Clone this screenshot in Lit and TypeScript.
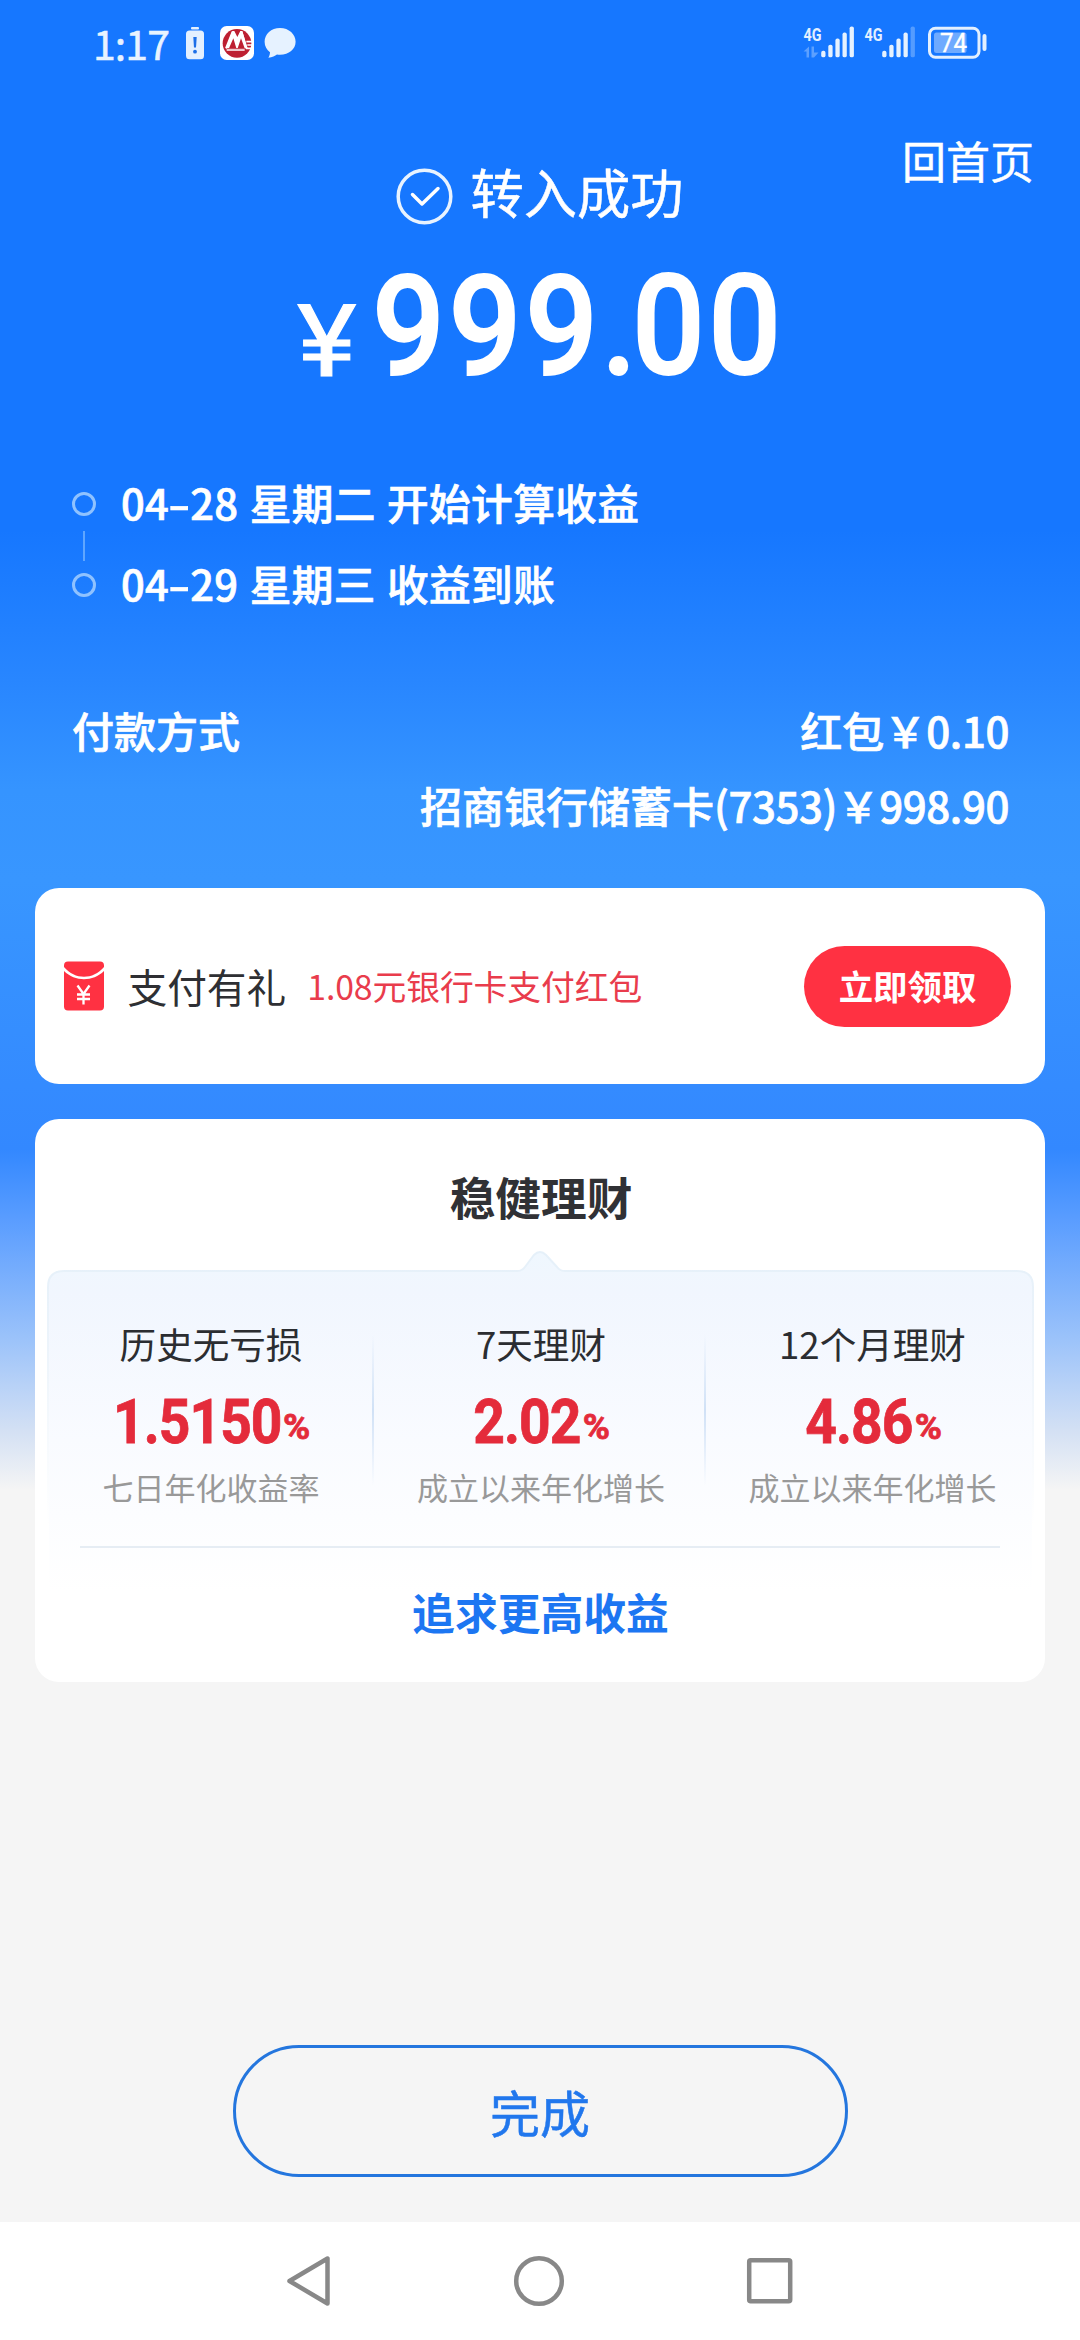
import { LitElement, html, css, svg } from "lit";
import { customElement, property } from "lit/decorators.js";

interface Product {
  name: string;
  rate: string;
  note: string;
}

const PRODUCTS: Product[] = [
  { name: "历史无亏损", rate: "1.5150", note: "七日年化收益率" },
  { name: "7天理财", rate: "2.02", note: "成立以来年化增长" },
  { name: "12个月理财", rate: "4.86", note: "成立以来年化增长" },
];

@customElement("signal-bars")
class SignalBars extends LitElement {
  @property({ type: Number }) level = 5;
  @property({ type: Boolean }) data = false;

  static styles = css`
    :host { display: block; width: 52px; height: 34px; }
    svg { display: block; overflow: visible; }
    text { font: 700 18px Roboto, sans-serif; fill: #e3f0ff; }
  `;

  render() {
    return html`<svg width="52" height="34" viewBox="0 0 52 34">
      <text x="1.500" y="15" textLength="18" lengthAdjust="spacingAndGlyphs">4G</text>
      ${this.data
        ? svg`<path d="M1.500 25.500L7 20.500v11H4.500v-6zM9.500 20.500H12v6h4.500L12 31.500H9.500z" fill="#fff" opacity=".3"/>`
        : ""}
      ${[0, 1, 2, 3, 4].map((i) => {
        const h = 6.5 + i * 6.1;
        return svg`<rect x=${19.2 + i * 7.1} y=${31.3 - h} width="4.300" height=${h} rx="1.900"
          fill="#e6f2ff" opacity=${i < this.level ? 1 : 0.3} />`;
      })}
    </svg>`;
  }
}

@customElement("status-bar")
class StatusBar extends LitElement {
  static styles = css`
    :host {
      display: flex; height: 86px; box-sizing: border-box; padding: 26px 93px 0 93px;
      justify-content: space-between; align-items: flex-start;
    }
    .group { display: flex; align-items: flex-start; height: 34px; }
    .time {
      font: 400 41px/33px "Noto Sans CJK SC", sans-serif; letter-spacing: -0.9px;
      color: #e8f3ff; width: 92px; -webkit-text-stroke: .5px #e8f3ff;
    }
    .app { margin: 0 10px 0 15px; }
    .sim + .sim { margin-left: 9px; }
    .battery { margin-left: 12px; }
    svg { display: block; }
    .level { font: 400 25.500px Roboto, sans-serif; fill: #fff; stroke: #fff; stroke-width: .4px; }
  `;

  render() {
    return html`
      <div class="group">
        <span class="time">1:17</span>
        <svg width="20" height="34" viewBox="0 0 20 34">
          <rect x="6" y="1" width="8" height="2.400" rx="1" fill="#e3f0ff" />
          <rect x="1" y="4.600" width="18" height="28.600" rx="3.500" fill="#e3f0ff" />
          <path d="M8.300 11h3.400l-.7 10.500H9z" fill="#1c6fe8" />
          <circle cx="10" cy="25.700" r="1.900" fill="#1c6fe8" />
        </svg>
        <svg class="app" width="34" height="34" viewBox="0 0 102 102">
          <rect width="102" height="102" rx="20" fill="#fff" />
          <circle cx="51" cy="52" r="43" fill="#bd1f31" />
          <path d="M18 67L37 15h6l9 18 9-18h6l15 52z" fill="#fff" />
          <path d="M27 67l13-30 9 30zM53 67l10-30 11 30z" fill="#bd1f31" />
          <path d="M18 67L38 17M38 17l14 40M50 57L64 17M64 17l16 50" stroke="#fff" stroke-width="6" fill="none" />
          <path d="M20 72H74M79 47H96M82 57H96M78 67H94" stroke="#fff" stroke-width="5" />
        </svg>
        <svg width="32" height="34" viewBox="0 0 32 34">
          <path d="M16 2C7.200 2 .6 8.200.6 15.800c0 4.400 2.200 8 5.400 10.400-.2 2.500-.6 3.800-1.600 5.500 4-.4 6.600-1.700 8.600-3.200 1 .2 2 .3 3 .3 9 0 15.600-5.600 15.600-13S25 2 16 2z" fill="#e6f2ff" />
        </svg>
      </div>
      <div class="group">
        <signal-bars class="sim" level="5" data></signal-bars>
        <signal-bars class="sim" level="4"></signal-bars>
        <svg class="battery" width="60" height="34" viewBox="0 0 60 34">
          <rect x="2.500" y="2.300" width="49.500" height="29" rx="6" fill="none" stroke="#e3f0ff" stroke-width="3" />
          <rect x="7" y="6.500" width="32.500" height="20.500" rx="2.500" fill="#fff" opacity=".38" />
          <rect x="55.500" y="8" width="4" height="17" rx="2" fill="#e3f0ff" />
          <text class="level" x="13" y="25.800" textLength="27" lengthAdjust="spacingAndGlyphs">74</text>
        </svg>
      </div>
    `;
  }
}

@customElement("product-cell")
class ProductCell extends LitElement {
  @property({ attribute: false }) product!: Product;

  static styles = css`
    :host { display: flex; flex-direction: column; align-items: center; white-space: nowrap; }
    .name { font-size: 36.600px; line-height: 54px; color: #2b2d31; }
    .rate {
      display: flex; align-items: baseline; height: 74px; margin-top: 14px;
      font: 700 62px/74px Roboto, sans-serif; color: #e42b3b; letter-spacing: -1.100px;
      -webkit-text-stroke: .8px #e42b3b; transform: scaleX(.89);
    }
    .unit { font-size: 34.500px; letter-spacing: 0; margin-left: -1px; width: 32px; position: relative; top: -4px; }
    .unit span { display: inline-block; transform: scaleX(1.200); transform-origin: left; }
    .note { font-size: 31px; line-height: 46px; margin-top: 5px; color: #999; }
  `;

  render() {
    return html`
      <div class="name">${this.product.name}</div>
      <div class="rate">${this.product.rate}<span class="unit"><span>%</span></span></div>
      <div class="note">${this.product.note}</div>
    `;
  }
}

@customElement("app-root")
class AppRoot extends LitElement {
  static styles = css`
    :host {
      display: flex; flex-direction: column; width: 1080px; height: 2340px; overflow: hidden;
      font-family: "Noto Sans CJK SC", sans-serif; color: #fff; white-space: nowrap;
      background: linear-gradient(#1677ff 0, #1677ff 530px, #2886ff 680px, #3594ff 790px, #3896ff 880px,
        #348bff 1085px, #3388ff 1150px, #5a9dff 1220px, #9cc3fa 1340px, #d3e0f4 1430px, #f5f5f5 1490px);
    }
    svg { display: block; }
    .page { display: flex; flex-direction: column; height: 2222px; flex: none; }
    .header {
      display: grid; grid-template-columns: 1fr auto 1fr; height: 140px; box-sizing: border-box;
      padding: 42px 46px 0; -webkit-text-stroke: .5px #fff;
    }
    .success { grid-column: 2; display: flex; align-items: center; height: 64px; margin-top: 36px; gap: 17px; }
    .success-text { font-size: 53.300px; line-height: 64px; padding-bottom: 11px; }
    .home { font-size: 44px; line-height: 64px; text-align: right; }
    .amount {
      display: flex; align-items: baseline; height: 125px; margin-top: 19px; padding-left: 297px;
      font: 500 139.500px/164px Roboto, sans-serif;
    }
    .currency {
      width: 75px; font-size: 101px; font-weight: 400; transform: translateY(2px) scaleX(1.120);
      transform-origin: left; -webkit-text-stroke: 1px #fff;
    }
    .digits {
      width: 420px; letter-spacing: 3.800px; transform: scaleX(.92); transform-origin: left;
      -webkit-text-stroke: 1.800px #fff;
    }
    .point { letter-spacing: -5.500px; }
    .timeline { display: flex; padding: 93px 72px 0; height: 249px; box-sizing: border-box; gap: 25px; }
    .rail { display: flex; flex-direction: column; align-items: center; width: 24px; padding-top: 29px; }
    .dot { width: 24px; height: 24px; border-radius: 50%; border: 3.500px solid #8fc2ff; box-sizing: border-box; }
    .stem { width: 2px; height: 30px; margin: 15px 0 12px; background: #5fa6ff; }
    .events {
      font-size: 41.700px; line-height: 81px; font-weight: 500; letter-spacing: .35px; word-spacing: 1.500px;
      -webkit-text-stroke: .7px #fff; margin-top: -1px;
    }
    .dash { display: inline-block; width: 21px; text-align: center; transform: scaleX(1.500); }
    .payment {
      display: flex; justify-content: space-between; padding: 73px 71px 0 72px; height: 269px;
      box-sizing: border-box; font-size: 42px; line-height: 75px; font-weight: 500;
      -webkit-text-stroke: .7px #fff;
    }
    .sources { text-align: right; }
    .num { letter-spacing: -.4px; }
    .gift {
      display: flex; align-items: center; height: 196px; margin: 0 35px; box-sizing: border-box;
      padding: 0 34px 0 28px; background: #fff; border-radius: 24px; color: #2e2f33;
    }
    .gift-title { font-size: 39.700px; line-height: 60px; margin: 0 21px 0 22.500px; }
    .gift-desc { font-size: 33.800px; line-height: 60px; color: #e93c4c; letter-spacing: -.1px; }
    .claim {
      margin-left: auto; width: 207px; height: 81px; border-radius: 41px; background: #ff3142; color: #fff;
      font-size: 34.400px; line-height: 79px; font-weight: 700; text-align: center;
    }
    .finance {
      height: 563px; margin: 35px 35px 0; border-radius: 24px; background: #fff; box-sizing: border-box;
      padding: 44px 11px 0 12px; display: flex; flex-direction: column; text-align: center;
    }
    .title { font-size: 45.700px; line-height: 66px; font-weight: 700; color: #303135; padding-left: 1px; }
    .panel { margin-top: 20px; position: relative; height: 340px; }
    .panel-bg { position: absolute; left: 0; top: 0; }
    .products {
      position: relative; display: grid; grid-template-columns: 328px 332px 331px; padding-top: 68px;
      height: 241px; box-sizing: content-box;
    }
    .products product-cell { position: relative; }
    .products product-cell + product-cell::before {
      content: ""; position: absolute; left: -3px; top: 17px; width: 2px; height: 152px;
      background: linear-gradient(#d5e6f800, #d0e1f6 50%, #d5e6f800);
    }
    .rule { position: relative; height: 2px; width: 920px; margin: -12px 0 0 33px; background: #e6edf4; }
    .more { font-size: 42.800px; line-height: 62px; font-weight: 700; color: #1c76f2; margin-top: -9px; position: relative; }
    .footer { margin-top: auto; height: 177px; display: flex; justify-content: center; }
    .done {
      width: 615px; height: 132px; box-sizing: border-box; border: 3px solid #2476de; border-radius: 66px;
      color: #2177ed; font-size: 50px; line-height: 126px; text-align: center; -webkit-text-stroke: .5px #2177ed;
    }
    .nav {
      display: flex; height: 118px; flex: none; box-sizing: border-box; background: #fff;
      align-items: flex-start; padding: 32px 286px 0; justify-content: space-between;
    }
  `;

  render() {
    return html`
      <div class="page">
        <status-bar></status-bar>
        <div class="header">
          <div class="success">
            <svg width="57" height="57" viewBox="0 0 57 57" fill="none" stroke="#fff">
              <circle cx="28.500" cy="28.500" r="26.300" stroke-width="3.500" stroke="#e8f3ff" />
              <path d="M16.500 26.500l9.500 9.500 16-15.500" stroke-width="3.500" stroke-linecap="round" stroke-linejoin="round" />
            </svg>
            <span class="success-text">转入成功</span>
          </div>
          <div class="home">回首页</div>
        </div>
        <div class="amount">
          <div class="currency">¥</div>
          <div class="digits">999<span class="point">.</span>00</div>
        </div>
        <div class="timeline">
          <div class="rail"><div class="dot"></div><div class="stem"></div><div class="dot"></div></div>
          <div class="events">
            <div>04<span class="dash">-</span>28 星期二 开始计算收益</div>
            <div>04<span class="dash">-</span>29 星期三 收益到账</div>
          </div>
        </div>
        <div class="payment">
          <div>付款方式</div>
          <div class="sources">
            <div>红包￥<span class="num">0.10</span></div>
            <div>招商银行储蓄卡<span class="num">(7353)</span>￥<span class="num">998.90</span></div>
          </div>
        </div>
        <div class="gift">
          <svg width="42" height="50" viewBox="0 0 42 50">
            <path d="M5 0.500h32a4 4 0 0 1 4 4V6C30 19 12 19 1 6V4.500a4 4 0 0 1 4-4z" fill="#ff3142" />
            <path d="M1 10c11 11 29 11 40 0v35.500a4 4 0 0 1-4 4H5a4 4 0 0 1-4-4z" fill="#ff3142" />
            <path d="M14.500 24.500L20.500 33l6-8.500M14 33.500h13M14 38h13M20.500 33v10.500" stroke="#fff" stroke-width="2.300" fill="none" />
          </svg>
          <div class="gift-title">支付有礼</div>
          <div class="gift-desc">1.08元银行卡支付红包</div>
          <div class="claim">立即领取</div>
        </div>
        <div class="finance">
          <div class="title">稳健理财</div>
          <div class="panel">
            <svg class="panel-bg" width="987" height="345" viewBox="0 0 987 345">
              <defs>
                <linearGradient id="fill" x1="0" y1="0" x2="0" y2="1">
                  <stop offset="0" stop-color="#eff7fe" />
                  <stop offset=".12" stop-color="#f1f6fe" />
                  <stop offset=".55" stop-color="#f9fbff" />
                  <stop offset="1" stop-color="#ffffff" />
                </linearGradient>
                <linearGradient id="edge" x1="0" y1="0" x2="0" y2="1">
                  <stop offset="0" stop-color="#e5f0f9" />
                  <stop offset=".3" stop-color="#edf4fb" />
                  <stop offset=".8" stop-color="#fff" />
                </linearGradient>
              </defs>
              <path d="M1 344V38Q1 22 17 22H470Q475 22 478 18L487 6Q493 0 499 6L510 18Q513 22 518 22H970Q986 22 986 38V344"
                fill="url(#fill)" stroke="url(#edge)" stroke-width="2" />
            </svg>
            <div class="products">
              ${PRODUCTS.map((p) => html`<product-cell .product=${p}></product-cell>`)}
            </div>
            <div class="rule"></div>
          </div>
          <div class="more">追求更高收益</div>
        </div>
        <div class="footer"><div class="done">完成</div></div>
      </div>
      <div class="nav">
        <svg width="46" height="54" viewBox="0 0 46 54">
          <path d="M3.500 27L41.500 4.500V49.500z" fill="none" stroke="#888" stroke-width="4.500" stroke-linejoin="round" />
        </svg>
        <svg width="54" height="54" viewBox="0 0 54 54">
          <circle cx="27" cy="27" r="22.800" fill="none" stroke="#888" stroke-width="4.500" />
        </svg>
        <svg width="48" height="54" viewBox="0 0 48 54">
          <rect x="3.200" y="6.200" width="41" height="41" rx="1.500" fill="none" stroke="#888" stroke-width="4.500" />
        </svg>
      </div>
    `;
  }
}
